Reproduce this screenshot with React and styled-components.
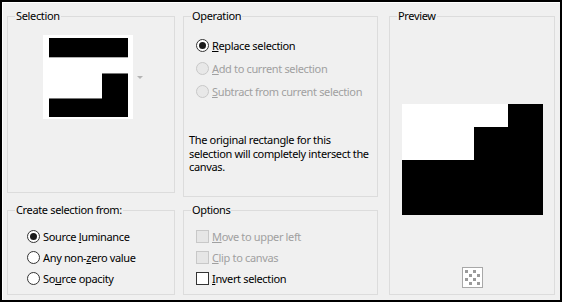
import React from "react";
import styled, { createGlobalStyle } from "styled-components";

const GlobalStyle = createGlobalStyle`
  body {
    margin: 0;
    background: #fff;
    font-family: "Noto Sans", "Open Sans", sans-serif;
    font-size: 11px;
    letter-spacing: -0.35px;
    color: #000;
  }
`;

// dialog frame with the black outline of the screenshot
const Frame = styled.div`
  width: 562px;
  height: 302px;
  box-sizing: border-box;
  border: 2px solid #000;
  background: #f0f0f0;
  box-shadow: inset 1px 1px 0 #fff;
  display: grid;
  grid-template-columns: 168px 195px 169px;
  grid-template-rows: 188px 92px;
  column-gap: 8px;
  row-gap: 6px;
  padding: 7px 0 0 5px;
`;

const Group = styled.fieldset`
  margin: 0;
  padding: 0;
  border: 1px solid #dcdcdc;
  min-width: 0;
  box-sizing: border-box;
  grid-column: ${(p) => p.$col};
  grid-row: ${(p) => p.$rows};
  margin-left: ${(p) => p.$ml || "0"};
  margin-bottom: ${(p) => p.$mb || "0"};
`;

const Legend = styled.legend`
  margin-left: 7px;
  padding: 0 1px;
  line-height: 14px;
  height: 14px;
`;

const Body = styled.div`
  display: flex;
  flex-direction: column;
  align-items: ${(p) => p.$align || "flex-start"};
  padding: ${(p) => p.$pad || "0"};
`;

const ThumbRow = styled.div`
  display: flex;
  align-items: center;
  gap: 4px;
`;

const Thumb = styled.svg`
  display: block;
  width: 90px;
  height: 84px;
`;

const Arrow = styled.span`
  width: 0;
  height: 0;
  border-left: 3px solid transparent;
  border-right: 3px solid transparent;
  border-top: 3px solid #b4b4b4;
`;

const OptionList = styled.div`
  display: flex;
  flex-direction: column;
  padding-left: ${(p) => p.$indent || "0"};
`;

const Row = styled.label`
  display: flex;
  align-items: center;
  height: ${(p) => p.$h || "21px"};
  gap: 3px;
  color: ${(p) => (p.$disabled ? "#a0a0a0" : "#000")};
  white-space: nowrap;
`;

const Radio = styled.span`
  width: 13px;
  height: 13px;
  box-sizing: border-box;
  border-radius: 50%;
  border: 1px solid ${(p) => (p.$disabled ? "#c8c8c8" : "#333")};
  background: ${(p) => (p.$disabled ? "#e8e8e8" : "#fff")};
  display: flex;
  align-items: center;
  justify-content: center;
  flex: none;
  &::after {
    content: "";
    display: ${(p) => (p.$checked ? "block" : "none")};
    width: 7px;
    height: 7px;
    border-radius: 50%;
    background: #1a1a1a;
  }
`;

const Check = styled.span`
  width: 13px;
  height: 13px;
  box-sizing: border-box;
  border: 1px solid ${(p) => (p.$disabled ? "#c8c8c8" : "#333")};
  background: ${(p) => (p.$disabled ? "#e6e6e6" : "#fff")};
  flex: none;
`;

const Note = styled.p`
  margin: 30px 0 0 5px;
  line-height: 13.5px;
  white-space: nowrap;
`;

const PreviewImg = styled.svg`
  display: block;
  width: 141px;
  height: 111px;
`;

const CheckerIcon = styled.svg`
  display: block;
  width: 21px;
  height: 21px;
  margin-top: 52px;
`;

function Checker() {
  const cells = [];
  for (let r = 0; r < 4; r++) {
    for (let c = 0; c < 4; c++) {
      if ((r + c) % 2 === 0) {
        cells.push(
          <rect key={`${r}-${c}`} x={3 + c * 4} y={3 + r * 4} width="3" height="3" fill="#9a9a9a" />
        );
      }
    }
  }
  return (
    <CheckerIcon viewBox="0 0 21 21">
      <rect x="0.5" y="0.5" width="20" height="20" fill="#fff" stroke="#a8a8a8" />
      {cells}
    </CheckerIcon>
  );
}

export default function App() {
  return (
    <>
      <GlobalStyle />
      <Frame>
        <Group $col="1" $rows="1" $mb="4px">
          <Legend>Selection</Legend>
          <Body $pad="12px 0 0 35px">
            <ThumbRow>
              <Thumb viewBox="0 0 90 84">
                <rect width="90" height="84" fill="#fff" />
                <rect x="6" y="3" width="79" height="19" fill="#000" />
                <rect x="6" y="22" width="79" height="1" fill="#b0b0b0" />
                <rect x="59" y="38" width="26" height="44" fill="#000" />
                <rect x="59" y="38" width="26" height="1" fill="#777" />
                <rect x="6" y="63" width="53" height="19" fill="#000" />
                <rect x="6" y="63" width="53" height="1" fill="#777" />
              </Thumb>
              <Arrow />
            </ThumbRow>
          </Body>
        </Group>

        <Group $col="2" $rows="1">
          <Legend>Operation</Legend>
          <Body $pad="11px 0 0 0">
            <OptionList $indent="12px">
              <Row $h="23px">
                <Radio $checked />
                <span><u>R</u>eplace selection</span>
              </Row>
              <Row $h="23px" $disabled>
                <Radio $disabled />
                <span><u>A</u>dd to current selection</span>
              </Row>
              <Row $h="23px" $disabled>
                <Radio $disabled />
                <span><u>S</u>ubtract from current selection</span>
              </Row>
            </OptionList>
            <Note>
              The original rectangle for this
              <br />
              selection will completely intersect the
              <br />
              canvas.
            </Note>
          </Body>
        </Group>

        <Group $col="3" $rows="1 / 3" $ml="3px">
          <Legend>Preview</Legend>
          <Body $align="center" $pad="81px 0 0 0">
            <PreviewImg viewBox="0 0 141 111">
              <rect width="141" height="111" fill="#000" />
              <rect x="0" y="0" width="106" height="23" fill="#fff" />
              <rect x="0" y="23" width="72" height="33" fill="#fff" />
            </PreviewImg>
            <Checker />
          </Body>
        </Group>

        <Group $col="1" $rows="2">
          <Legend>Create selection from:</Legend>
          <Body $pad="9px 0 0 19px">
            <OptionList>
              <Row>
                <Radio $checked />
                <span>Source <u>l</u>uminance</span>
              </Row>
              <Row>
                <Radio />
                <span>Any non-<u>z</u>ero value</span>
              </Row>
              <Row>
                <Radio />
                <span>So<u>u</u>rce opacity</span>
              </Row>
            </OptionList>
          </Body>
        </Group>

        <Group $col="2" $rows="2">
          <Legend>Options</Legend>
          <Body $pad="9px 0 0 12px">
            <OptionList>
              <Row $disabled>
                <Check $disabled />
                <span><u>M</u>ove to upper left</span>
              </Row>
              <Row $disabled>
                <Check $disabled />
                <span><u>C</u>lip to canvas</span>
              </Row>
              <Row>
                <Check />
                <span><u>I</u>nvert selection</span>
              </Row>
            </OptionList>
          </Body>
        </Group>
      </Frame>
    </>
  );
}
